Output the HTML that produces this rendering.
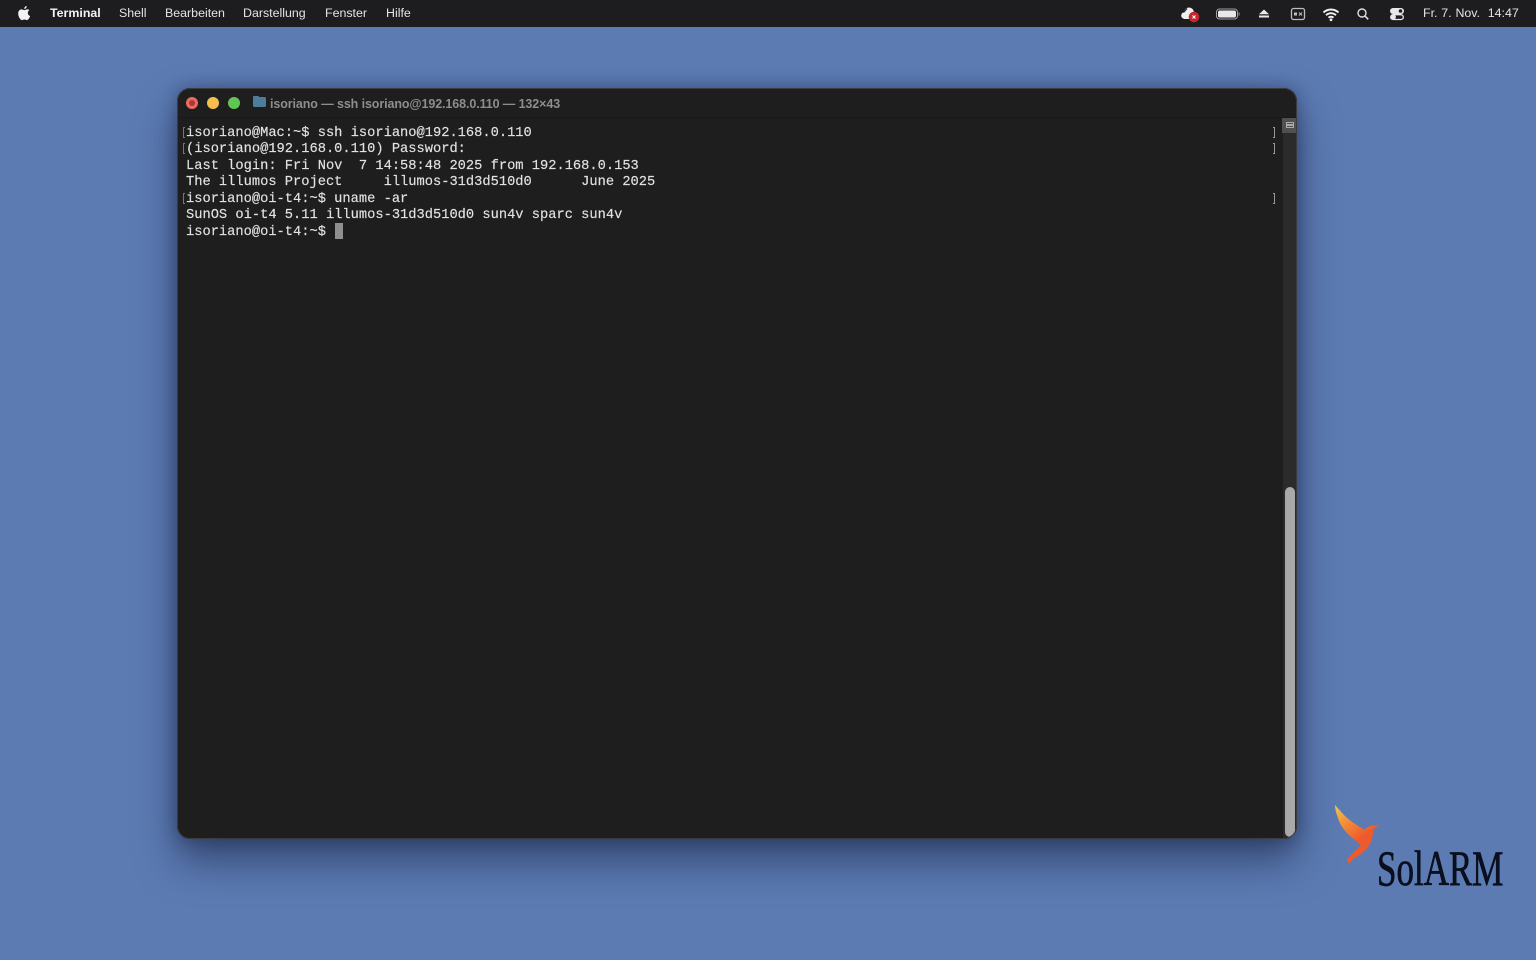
<!DOCTYPE html>
<html lang="de">
<head>
<meta charset="utf-8">
<title>Terminal</title>
<style>
html,body{margin:0;padding:0;width:1536px;height:960px;overflow:hidden;background:#5c7bb3;}
*{box-sizing:border-box;}
body{position:relative;font-family:"Liberation Sans",sans-serif;filter:blur(.35px);}
#menubar{position:absolute;left:0;top:0;width:1536px;height:27px;background:#1d1d1f;color:#e4e4e4;font-size:12.4px;}
#menubar span{position:absolute;top:6px;line-height:15px;white-space:nowrap;}
#menubar svg{position:absolute;left:0;top:0;}
#win{position:absolute;left:177px;top:88px;width:1120px;height:751px;background:#1e1e1e;border-radius:13px;box-shadow:0 22px 40px rgba(20,30,60,.55),0 0 16px rgba(20,30,60,.4);overflow:hidden;}
#edge{position:absolute;left:0;top:0;width:1120px;height:751px;border-radius:13px;border:1px solid #3c3c3e;z-index:5;}
.light{position:absolute;top:9px;width:12px;height:12px;border-radius:50%;}
#title{position:absolute;left:93px;top:7.5px;font-size:12.5px;line-height:16px;font-weight:bold;color:#8e8e8e;white-space:nowrap;letter-spacing:-.1px;}
#folder{position:absolute;left:76px;top:9px;width:13px;height:10px;background:#4d7d9c;border-radius:1.5px;}
#folder:before{content:"";position:absolute;left:0;top:-1px;width:6px;height:2px;background:#4d7d9c;border-radius:1px 1px 0 0;}
#divider{position:absolute;left:0;top:29px;width:1120px;height:1px;background:#191919;}
#term{position:absolute;left:9px;top:36px;margin:2px 0 0;font-family:"Liberation Mono",monospace;font-size:13.73px;line-height:16.48px;color:#e2e2e2;white-space:pre;-webkit-text-stroke:.15px #e2e2e2;}
.mk{position:absolute;width:2px;height:11px;border:1px solid #777;border-right:0;left:6px;}
.mr{position:absolute;width:2px;height:11px;border:1px solid #999;border-left:0;left:1096px;}
#cursor{position:absolute;left:158px;top:135px;width:8px;height:16px;background:#8f8f8f;}
#track{position:absolute;left:1106px;top:30px;width:14px;height:721px;background:#2b2b2b;}
#thumb{position:absolute;left:1108px;top:399px;width:10px;height:350px;background:#a9a9a9;border-radius:5px;}
#split{position:absolute;left:1105px;top:30px;width:15px;height:15px;background:#505050;}
#split i{position:absolute;left:4px;width:8px;height:3px;border:1px solid #aaa;}
#logo{position:absolute;left:1320px;top:795px;width:200px;height:100px;}
#brand{position:absolute;left:1377px;top:843px;font-family:"Liberation Serif",serif;font-size:50px;line-height:50px;color:#0a0f1e;-webkit-text-stroke:.7px #0a0f1e;transform:scaleX(.70);transform-origin:left top;white-space:nowrap;}
</style>
</head>
<body>
<div id="menubar">
<svg width="1536" height="27" viewBox="0 0 1536 27">
<path d="M27.2 9.4c-1.1 0-1.8.7-2.8.7s-1.8-.7-2.9-.7c-1.700 0-3.300 1.500-3.300 4.200 0 3 2.200 6.500 3.800 6.500.8 0 1.300-.6 2.400-.6s1.500.6 2.400.6c1.400 0 2.800-2.300 3.300-4-1.500-.6-2.300-1.900-2.300-3.200 0-1.200.6-2.200 1.700-2.900-.6-.4-1.400-.6-2.300-.6zM24.400 9c1.200 0 2.500-1.400 2.300-3-1.300.1-2.700 1.500-2.300 3z" fill="#f2f2f2"/>
<circle cx="1189" cy="12.500" r="5" fill="#f0f0f0"/>
<circle cx="1184.500" cy="15.500" r="3.300" fill="#f0f0f0"/>
<rect x="1184" y="13" width="10" height="6" fill="#f0f0f0"/>
<path d="M1187 8.500l-3.500 4" stroke="#1d1d1f" stroke-width="1.200"/>
<circle cx="1194" cy="17" r="5.300" fill="#c3272d"/>
<path d="M1192.500 15.500l3 3M1195.500 15.500l-3 3" stroke="#fff" stroke-width="1"/>
<rect x="1216.500" y="9" width="21" height="10" rx="3" fill="none" stroke="#a0a0a0" stroke-width="1"/>
<rect x="1218" y="10.500" width="18" height="7" rx="1.800" fill="#e8e8e8"/>
<rect x="1238.500" y="12.500" width="1.200" height="3" fill="#888"/>
<path d="M1264 9.500l5 4.800h-10z" fill="#e8e8e8"/>
<rect x="1259" y="15.500" width="10" height="2" fill="#e8e8e8"/>
<rect x="1291.500" y="8.500" width="13" height="11" rx="2" fill="none" stroke="#bdbdbd" stroke-width="1.300"/>
<rect x="1294" y="12.500" width="3" height="3" fill="#bdbdbd"/>
<path d="M1299 12.500l3 3M1302 12.500l-3 3" stroke="#bdbdbd" stroke-width="1"/>
<path d="M1323.500 12.500c4.400-4 10.600-4 15 0M1326 15.200c3-2.700 7-2.700 10 0M1328.500 17.700c1.500-1.300 3.500-1.300 5 0" fill="none" stroke="#f0f0f0" stroke-width="1.900"/>
<circle cx="1331" cy="19.800" r="1.400" fill="#f0f0f0"/>
<circle cx="1362" cy="13" r="4" fill="none" stroke="#e0e0e0" stroke-width="1.400"/>
<path d="M1365 16l3.200 3.300" stroke="#e0e0e0" stroke-width="1.600"/>
<rect x="1390" y="8" width="14" height="6" rx="3" fill="#e8e8e8"/>
<circle cx="1400.500" cy="11" r="1.800" fill="#1d1d1f"/>
<rect x="1390.700" y="14.700" width="12.600" height="4.800" rx="2.400" fill="none" stroke="#e8e8e8" stroke-width="1.300"/>
<circle cx="1393.500" cy="17" r="2.400" fill="#e8e8e8"/>
</svg>
<span style="left:50px;font-weight:bold;color:#f2f2f2">Terminal</span>
<span style="left:119px">Shell</span>
<span style="left:165px">Bearbeiten</span>
<span style="left:243px">Darstellung</span>
<span style="left:325px">Fenster</span>
<span style="left:386px">Hilfe</span>
<span style="left:1423px;word-spacing:.4px">Fr. 7. Nov.&nbsp; 14:47</span>
</div>

<div id="win">
<div class="light" style="left:9px;background:#ed6a5e"></div>
<div style="position:absolute;left:12px;top:12px;width:6px;height:6px;border-radius:50%;background:#a83a33"></div>
<div class="light" style="left:30px;background:#f5bf4f"></div>
<div class="light" style="left:51px;background:#61c554"></div>
<div id="folder"></div>
<div id="title">isoriano — ssh isoriano@192.168.0.110 — 132×43</div>
<div id="divider"></div>
<pre id="term">isoriano@Mac:~$ ssh isoriano@192.168.0.110
(isoriano@192.168.0.110) Password:
Last login: Fri Nov  7 14:58:48 2025 from 192.168.0.153
The illumos Project     illumos-31d3d510d0      June 2025
isoriano@oi-t4:~$ uname -ar
SunOS oi-t4 5.11 illumos-31d3d510d0 sun4v sparc sun4v
isoriano@oi-t4:~$ </pre>
<div class="mk" style="top:39px"></div>
<div class="mk" style="top:55px"></div>
<div class="mk" style="top:105px"></div>
<div class="mr" style="top:39px"></div>
<div class="mr" style="top:55px"></div>
<div class="mr" style="top:105px"></div>
<div id="cursor"></div>
<div id="track"></div>
<div id="thumb"></div>
<div id="split"><i style="top:4px"></i><i style="top:7px"></i></div>
<div id="edge"></div>
</div>

<svg id="logo" viewBox="0 0 200 100">
<defs>
<linearGradient id="wing" gradientUnits="userSpaceOnUse" x1="15" y1="10" x2="40" y2="44">
<stop offset="0" stop-color="#f0c850"/>
<stop offset=".45" stop-color="#f4913a"/>
<stop offset="1" stop-color="#ee5a2c"/>
</linearGradient>
</defs>
<path d="M15 10L24 20C30 26 38 31 45 35C47 31 52 30 60 30.500C55 32 54 34 53 36C53 44 50 52 43 57C40 60 37 62 34 63L29 69L27 65L31 60C34 57 38 53 41 50C33 44 23 36 19 26C17 20 15 15 15 10z" fill="url(#wing)"/>
</svg>
<div id="brand">SolARM</div>
</body>
</html>
